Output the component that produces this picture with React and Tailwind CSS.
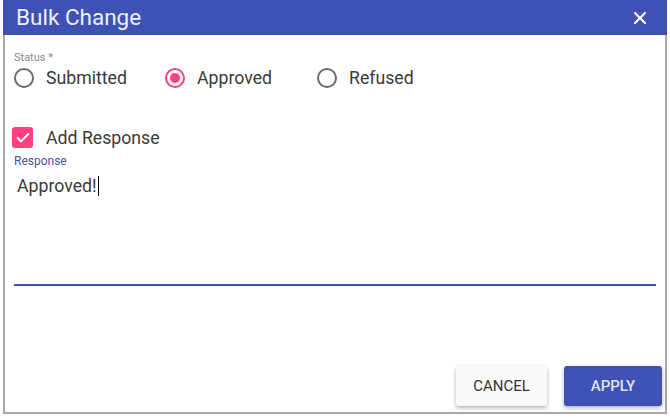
import { X, Check } from "lucide-react";

const Radio = ({ label, checked }) => (
  <label className="flex items-center gap-3">
    <span
      className={
        "flex h-[20px] w-[20px] items-center justify-center rounded-full border-2 " +
        (checked ? "border-[#ff4081]" : "border-[#6b6b6b]")
      }
    >
      {checked && <span className="h-[10px] w-[10px] rounded-full bg-[#ff4081]" />}
    </span>
    <span className="text-[17.7px] text-[#3a3a3a]">{label}</span>
  </label>
);

export default function App() {
  return (
    <div className="h-[418px] w-[670px] bg-white pl-[3px] pr-[3px] font-['Roboto',sans-serif]">
      <div className="flex h-[414px] flex-col border-2 border-t-0 border-[#a8a8a8]">
        {/* header */}
        <div className="flex h-[35px] items-center justify-between bg-[#3f51b5] pl-[13px] pr-[17px] -mx-[2px]">
          <span className="text-[22.5px] text-[#eef0fa]">Bulk Change</span>
          <X className="h-[20px] w-[20px] text-white" strokeWidth={2.5} />
        </div>

        <div className="flex flex-1 flex-col pl-[9px] pr-[3px]">
          {/* status */}
          <div className="mt-[16px] text-[11px] leading-[13px] text-[#8a8a8a]">Status *</div>
          <div className="mt-[1px] flex items-center">
            <div className="w-[151px]">
              <Radio label="Submitted" />
            </div>
            <div className="w-[152px]">
              <Radio label="Approved" checked />
            </div>
            <Radio label="Refused" />
          </div>

          {/* checkbox */}
          <div className="mt-[33px] flex items-center gap-[13px]">
            <span className="-ml-[2px] flex h-[21px] w-[21px] items-center justify-center rounded-[3px] bg-[#ff4081]">
              <Check className="h-[16px] w-[16px] text-white" strokeWidth={3} />
            </span>
            <span className="text-[17.7px] text-[#3a3a3a]">Add Response</span>
          </div>

          {/* response field */}
          <div className="mt-[3px] mr-[6px] flex h-[132px] flex-col border-b-2 border-[#3f51b5]">
            <span className="text-[12px] leading-[14px] text-[#3f51b5]">Response</span>
            <span className="mt-[5px] ml-[3px] flex items-center text-[17.7px] text-[#3a3a3a]">
              Approved!
              <span className="ml-[1px] inline-block h-[20px] w-[1px] bg-black" />
            </span>
          </div>

          {/* actions */}
          <div className="mt-auto mb-[6px] flex justify-end gap-[17px]">
            <button className="h-[40px] w-[91px] rounded-[3px] bg-[#fafafa] text-[15px] text-[#333] shadow-[0_2px_4px_rgba(0,0,0,0.3)]">
              CANCEL
            </button>
            <button className="h-[40px] w-[98px] rounded-[3px] bg-[#3f51b5] text-[15px] font-medium text-[#dfe3f7] shadow-[0_2px_4px_rgba(0,0,0,0.3)]">
              APPLY
            </button>
          </div>
        </div>
      </div>
    </div>
  );
}
